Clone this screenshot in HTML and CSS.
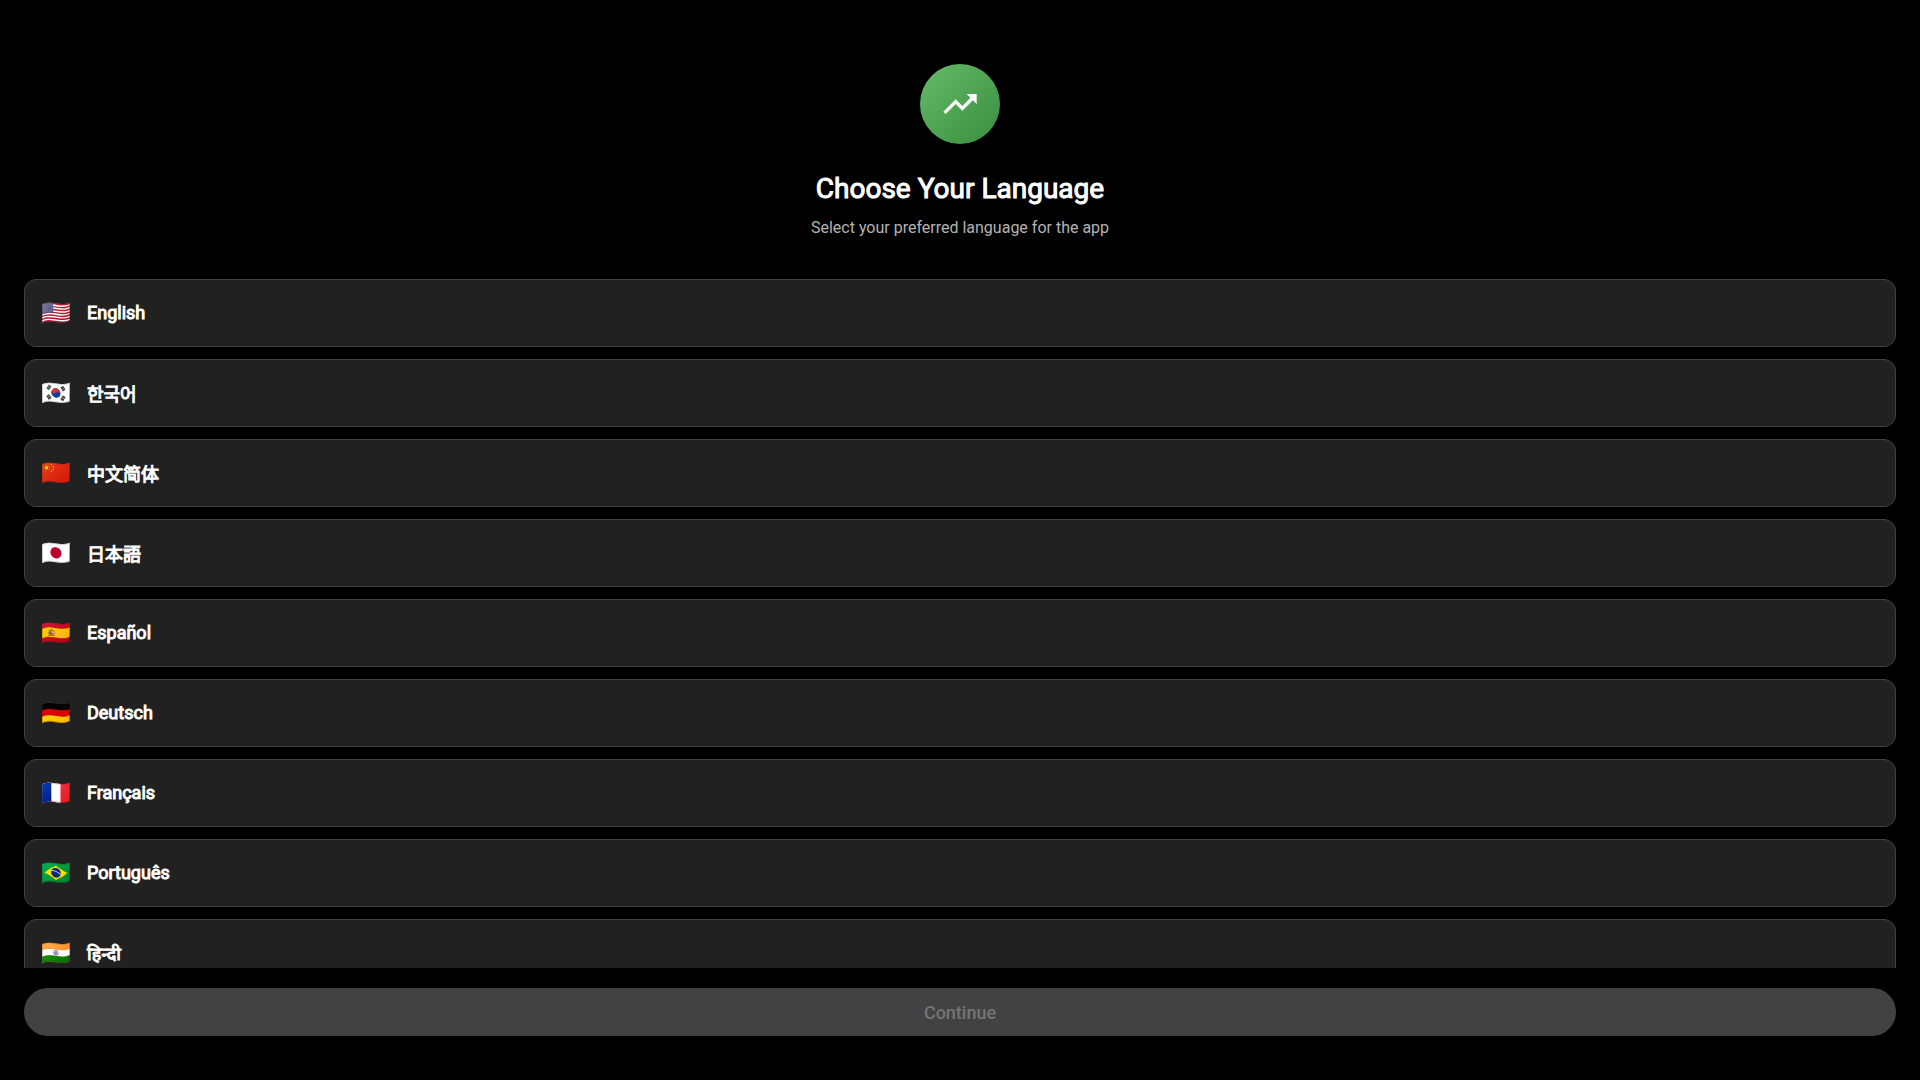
FILE: index.html
```
<!DOCTYPE html>
<html lang="en">
<head>
<meta charset="utf-8">
<meta name="viewport" content="width=device-width, initial-scale=1">
<title>Choose Your Language</title>
<link rel="stylesheet" href="styles.css">
</head>
<body>
<main class="screen">
  <header class="intro">
    <div class="logo">
      <svg class="logo-icon" viewBox="0 0 24 24" aria-hidden="true"><path d="M16 6l2.29 2.29-4.88 4.88-4-4L2 16.59 3.41 18l6-6 4 4 6.3-6.29L22 12V6z"/></svg>
    </div>
    <h1 class="title">Choose Your Language</h1>
    <p class="subtitle">Select your preferred language for the app</p>
  </header>
  <ul class="languages">
    <li><button class="language" type="button"><span class="flag">🇺🇸</span><span class="name" lang="en">English</span></button></li>
    <li><button class="language" type="button"><span class="flag">🇰🇷</span><span class="name" lang="ko">한국어</span></button></li>
    <li><button class="language" type="button"><span class="flag">🇨🇳</span><span class="name" lang="zh-Hans">中文简体</span></button></li>
    <li><button class="language" type="button"><span class="flag">🇯🇵</span><span class="name" lang="ja">日本語</span></button></li>
    <li><button class="language" type="button"><span class="flag">🇪🇸</span><span class="name" lang="es">Español</span></button></li>
    <li><button class="language" type="button"><span class="flag">🇩🇪</span><span class="name" lang="de">Deutsch</span></button></li>
    <li><button class="language" type="button"><span class="flag">🇫🇷</span><span class="name" lang="fr">Français</span></button></li>
    <li><button class="language" type="button"><span class="flag">🇧🇷</span><span class="name" lang="pt">Português</span></button></li>
    <li><button class="language" type="button"><span class="flag">🇮🇳</span><span class="name" lang="hi">हिन्दी</span></button></li>
  </ul>
  <button class="continue" type="button" disabled>Continue</button>
</main>
</body>
</html>
```
FILE: styles.css
```
* {
  box-sizing: border-box;
}

body {
  margin: 0;
  background: #000;
  color: #fff;
  font-family: Roboto, "Noto Sans CJK SC", "Noto Sans", sans-serif;
}

.screen {
  display: flex;
  flex-direction: column;
  height: 100vh;
  padding: 64px 24px 44px;
}

.intro {
  display: flex;
  flex-direction: column;
  align-items: center;
  margin-bottom: 40px;
  text-align: center;
}

.logo {
  display: grid;
  place-items: center;
  width: 80px;
  height: 80px;
  border-radius: 50%;
  background: linear-gradient(135deg, #66bb6a, #388e3c);
}

.logo-icon {
  width: 40px;
  height: 40px;
  fill: #fff;
}

.title {
  margin: 24px 0 6px;
  font-size: 28px;
  font-weight: 400;
  line-height: 42px;
  -webkit-text-stroke: 1px currentColor;
}

.subtitle {
  margin: 0;
  color: #b3b3b3;
  font-size: 16px;
  line-height: 23px;
}

.languages {
  display: flex;
  flex: 1;
  flex-direction: column;
  gap: 12px;
  min-height: 0;
  margin: 0 0 20px;
  padding: 0;
  overflow-y: auto;
  list-style: none;
  scrollbar-width: none;
}

.language {
  display: flex;
  align-items: center;
  gap: 16px;
  width: 100%;
  height: 68px;
  padding: 0 16px;
  border: 1px solid #424242;
  border-radius: 12px;
  background: #212121;
  color: #fff;
  font-family: inherit;
  text-align: left;
}

.flag {
  font-size: 24px;
  line-height: 32px;
}

.name {
  font-size: 18px;
  line-height: 24px;
  -webkit-text-stroke: 1px currentColor;
}

.name:lang(zh),
.name:lang(hi) {
  line-height: normal;
}

.name:lang(ko) {
  font-family: Roboto, "Noto Sans CJK KR", sans-serif;
  line-height: normal;
}

.name:lang(ja) {
  font-family: Roboto, "Noto Sans CJK JP", sans-serif;
  line-height: normal;
}

.continue {
  flex: none;
  width: 100%;
  height: 48px;
  border: 0;
  border-radius: 24px;
  background: #424242;
  color: #757575;
  font-family: inherit;
  font-size: 18px;
  font-weight: 500;
}
```
